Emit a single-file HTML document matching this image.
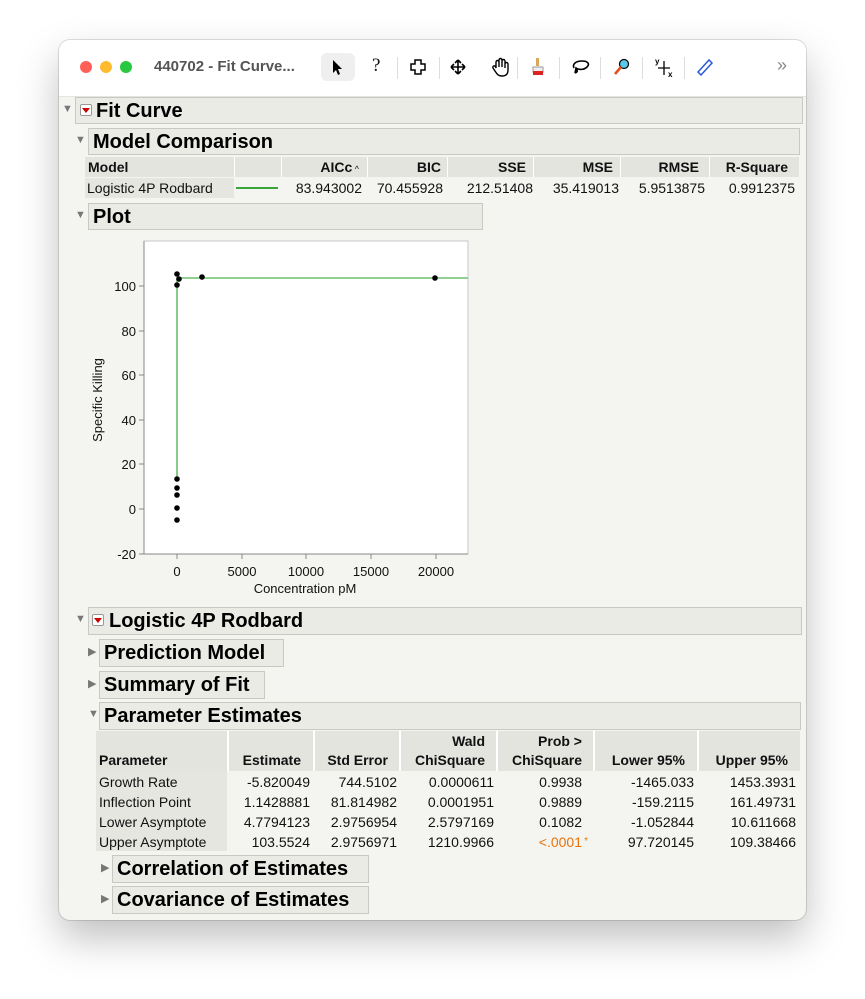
<!DOCTYPE html>
<html><head><style>
*{margin:0;padding:0;box-sizing:border-box}
body{width:865px;height:999px;background:#fff;position:relative;font-family:"Liberation Sans",Arial,sans-serif;overflow:hidden}
.win{position:absolute;left:59px;top:40px;width:747px;height:880px;border-radius:11px;background:#f4f4f0;box-shadow:0 18px 40px rgba(0,0,0,.25),0 0 0 1px rgba(0,0,0,.12);overflow:hidden}
.tb{position:absolute;left:0;top:0;width:747px;height:56px;background:#fff}
.a{position:absolute}
.hd{position:absolute;background:#ebebe6;border:1px solid #c9c9c4;font-weight:bold;color:#000;white-space:nowrap}
.h1{font-size:20px;line-height:27px;padding-left:4px}
.tri{position:absolute;font-size:11px;color:#777}
.t{position:absolute;font-size:14px;white-space:nowrap;color:#111}
.b{font-weight:bold}
.r{text-align:right}
.cell{position:absolute;background:#e6e6e1}
</style></head><body>
<div class="win">
<div class="tb">
 <div class="a" style="left:21px;top:21px;width:12px;height:12px;border-radius:6px;background:#fe5f57"></div>
 <div class="a" style="left:41px;top:21px;width:12px;height:12px;border-radius:6px;background:#febc2e"></div>
 <div class="a" style="left:61px;top:21px;width:12px;height:12px;border-radius:6px;background:#28c840"></div>
 <div class="t" style="left:95px;top:18px;font-size:15px;color:#555;font-weight:bold">440702 - Fit Curve...</div>
 <div class="a" style="left:262px;top:13px;width:34px;height:28px;border-radius:6px;background:#efefef"></div>
 <svg class="a" style="left:270px;top:18px" width="16" height="18"><path d="M4 2 L4 15 L7 12 L9 17 L11 16 L9 11 L13 11 Z" fill="#000"/></svg>
 <div class="t" style="left:313px;top:15px;font-size:19px;font-family:'Liberation Serif',serif">?</div>
 <div class="a" style="left:338px;top:17px;width:1px;height:22px;background:#ddd"></div>
 <svg class="a" style="left:351px;top:19px" width="16" height="16"><path d="M5 1h6v4h4v6h-4v4h-6v-4h-4v-6h4z" fill="none" stroke="#000" stroke-width="1.5"/></svg>
 <div class="a" style="left:380px;top:17px;width:1px;height:22px;background:#ddd"></div>
 <svg class="a" style="left:391px;top:19px" width="16" height="16"><path d="M8 1v14M1 8h14M8 1l-3 3M8 1l3 3M8 15l-3-3M8 15l3-3M1 8l3-3M1 8l3 3M15 8l-3-3M15 8l-3 3" stroke="#000" stroke-width="1.6" fill="none"/></svg>
 <svg class="a" style="left:432px;top:17px" width="20" height="20"><path d="M5 11V5a1.5 1.5 0 013 0v5V3a1.5 1.5 0 013 0v7V4a1.5 1.5 0 013 0v7V7a1.5 1.5 0 013 0v6c0 4-2 6-6 6s-5-2-7-5l-2-3a1.4 1.4 0 012.5-1.4z" fill="none" stroke="#000" stroke-width="1.4"/></svg>
 <div class="a" style="left:458px;top:17px;width:1px;height:22px;background:#ddd"></div>
 <svg class="a" style="left:472px;top:17px" width="14" height="20"><rect x="5" y="1" width="3" height="8" fill="#d9a65b"/><path d="M2 10h10v5H2z" fill="#eee" stroke="#999"/><path d="M2 14h10v4H2z" fill="#d22"/></svg>
 <div class="a" style="left:500px;top:17px;width:1px;height:22px;background:#ddd"></div>
 <svg class="a" style="left:512px;top:18px" width="20" height="18"><path d="M3 10c-2-4 2-7 8-7s8 3 5 6-8 3-11 1l-1 5M4 11c3 1 3 3 0 4" fill="none" stroke="#000" stroke-width="1.6"/></svg>
 <div class="a" style="left:541px;top:17px;width:1px;height:22px;background:#ddd"></div>
 <svg class="a" style="left:554px;top:18px" width="18" height="18"><circle cx="11" cy="6" r="4.5" fill="#5cc8e8" stroke="#000" stroke-width="1.2"/><path d="M8 9L2 16" stroke="#e05020" stroke-width="2.6"/></svg>
 <div class="a" style="left:583px;top:17px;width:1px;height:22px;background:#ddd"></div>
 <svg class="a" style="left:596px;top:17px" width="20" height="22"><text x="0" y="7" font-size="8" font-family="Liberation Sans" font-weight="bold">y</text><path d="M9 4v14M3 11h12" stroke="#000" stroke-width="1.3"/><text x="13" y="20" font-size="8" font-family="Liberation Sans" font-weight="bold">x</text></svg>
 <div class="a" style="left:625px;top:17px;width:1px;height:22px;background:#ddd"></div>
 <svg class="a" style="left:637px;top:18px" width="18" height="18"><path d="M2 14L13 2l3 3L5 17z" fill="none" stroke="#2a5ad8" stroke-width="1.5"/></svg>
 <div class="t" style="left:718px;top:15px;font-size:18px;color:#888">»</div>
</div>
<div class="a" style="left:0;top:56px;width:747px;height:1px;background:#e4e4e0"></div>
</div>

<div class="tri" style="left:62px;top:103px">▼</div>
<div class="hd h1" style="left:75px;top:97px;width:728px;height:27px;padding-left:20px">Fit Curve</div>
<div class="a" style="left:80px;top:104px;width:12px;height:12px;border:1px solid #999;background:#fff;border-radius:2px"></div>
<div class="a" style="left:82px;top:108px;width:0;height:0;border-left:4px solid transparent;border-right:4px solid transparent;border-top:5px solid #c00"></div>

<div class="tri" style="left:75px;top:134px">▼</div>
<div class="hd h1" style="left:88px;top:128px;width:712px;height:27px">Model Comparison</div>

<div class="cell" style="left:85px;top:157px;width:714px;height:20px;background:#e4e4df"></div>
<div class="a" style="left:234px;top:157px;width:1px;height:20px;background:#fff"></div>
<div class="a" style="left:281px;top:157px;width:1px;height:20px;background:#fff"></div>
<div class="a" style="left:367px;top:157px;width:1px;height:20px;background:#fff"></div>
<div class="a" style="left:447px;top:157px;width:1px;height:20px;background:#fff"></div>
<div class="a" style="left:533px;top:157px;width:1px;height:20px;background:#fff"></div>
<div class="a" style="left:620px;top:157px;width:1px;height:20px;background:#fff"></div>
<div class="a" style="left:709px;top:157px;width:1px;height:20px;background:#fff"></div>
<div class="t b" style="left:88px;top:159px">Model</div>
<div class="t b r" style="left:281px;top:159px;width:78px">AICc<span style="font-size:9px;font-weight:normal"> ^</span></div>
<div class="t b r" style="left:367px;top:159px;width:74px">BIC</div>
<div class="t b r" style="left:447px;top:159px;width:79px">SSE</div>
<div class="t b r" style="left:533px;top:159px;width:80px">MSE</div>
<div class="t b r" style="left:620px;top:159px;width:79px">RMSE</div>
<div class="t b r" style="left:709px;top:159px;width:79px">R-Square</div>
<div class="cell" style="left:85px;top:178px;width:149px;height:20px"></div>
<div class="t" style="left:87px;top:180px">Logistic 4P Rodbard</div>
<div class="a" style="left:236px;top:187px;width:42px;height:2px;background:#3aa63a"></div>
<div class="t r" style="left:281px;top:180px;width:81px">83.943002</div>
<div class="t r" style="left:367px;top:180px;width:76px">70.455928</div>
<div class="t r" style="left:447px;top:180px;width:86px">212.51408</div>
<div class="t r" style="left:533px;top:180px;width:86px">35.419013</div>
<div class="t r" style="left:620px;top:180px;width:85px">5.9513875</div>
<div class="t r" style="left:709px;top:180px;width:86px">0.9912375</div>

<div class="tri" style="left:75px;top:209px">▼</div>
<div class="hd h1" style="left:88px;top:203px;width:395px;height:27px">Plot</div>

<svg class="a" style="left:80px;top:232px" width="400" height="370" font-family="Liberation Sans" font-size="13">
 <rect x="64" y="9" width="324" height="313" fill="#fff" stroke="#c8c8c8"/>
 <path d="M64 9V322H388" fill="none" stroke="#888"/>
 <g stroke="#888"><path d="M59 54h5M59 99h5M59 143h5M59 188h5M59 232h5M59 277h5M59 322h5"/>
 <path d="M97 322v5M162 322v5M226 322v5M291 322v5M356 322v5"/></g>
 <g text-anchor="end" fill="#111"><text x="56" y="59">100</text><text x="56" y="104">80</text><text x="56" y="148">60</text><text x="56" y="193">40</text><text x="56" y="237">20</text><text x="56" y="282">0</text><text x="56" y="327">-20</text></g>
 <g text-anchor="middle" fill="#111"><text x="97" y="344">0</text><text x="162" y="344">5000</text><text x="226" y="344">10000</text><text x="291" y="344">15000</text><text x="356" y="344">20000</text>
 <text x="225" y="361">Concentration pM</text>
 <text transform="translate(22 168) rotate(-90)">Specific Killing</text></g>
 <path d="M97 248V46H388" fill="none" stroke="#6cc06c" stroke-width="1.6"/>
 <g fill="#000"><circle cx="97" cy="42" r="2.8"/><circle cx="97" cy="53" r="2.8"/><circle cx="99" cy="47" r="2.8"/><circle cx="122" cy="45" r="2.8"/><circle cx="355" cy="46" r="2.8"/>
 <circle cx="97" cy="247" r="2.8"/><circle cx="97" cy="256" r="2.8"/><circle cx="97" cy="263" r="2.8"/><circle cx="97" cy="276" r="2.8"/><circle cx="97" cy="288" r="2.8"/></g>
</svg>

<div class="tri" style="left:75px;top:613px">▼</div>
<div class="hd h1" style="left:88px;top:607px;width:714px;height:28px;padding-left:20px">Logistic 4P Rodbard</div>
<div class="a" style="left:92px;top:614px;width:12px;height:12px;border:1px solid #999;background:#fff;border-radius:2px"></div>
<div class="a" style="left:94px;top:618px;width:0;height:0;border-left:4px solid transparent;border-right:4px solid transparent;border-top:5px solid #c00"></div>

<div class="tri" style="left:88px;top:645px">▶</div>
<div class="hd h1" style="left:99px;top:639px;width:185px;height:28px">Prediction Model</div>
<div class="tri" style="left:88px;top:677px">▶</div>
<div class="hd h1" style="left:99px;top:671px;width:166px;height:28px">Summary of Fit</div>
<div class="tri" style="left:88px;top:708px">▼</div>
<div class="hd h1" style="left:99px;top:702px;width:702px;height:28px">Parameter Estimates</div>

<div class="cell" style="left:96px;top:731px;width:704px;height:40px;background:#e4e4df"></div>
<div class="cell" style="left:96px;top:771px;width:131px;height:80px"></div>
<div class="a" style="left:227px;top:731px;width:2px;height:40px;background:#fff"></div>
<div class="a" style="left:313px;top:731px;width:2px;height:40px;background:#fff"></div>
<div class="a" style="left:399px;top:731px;width:2px;height:40px;background:#fff"></div>
<div class="a" style="left:496px;top:731px;width:2px;height:40px;background:#fff"></div>
<div class="a" style="left:593px;top:731px;width:2px;height:40px;background:#fff"></div>
<div class="a" style="left:697px;top:731px;width:2px;height:40px;background:#fff"></div>
<div class="t b" style="left:99px;top:752px">Parameter</div>
<div class="t b r" style="left:229px;top:752px;width:72px">Estimate</div>
<div class="t b r" style="left:315px;top:752px;width:73px">Std Error</div>
<div class="t b r" style="left:401px;top:733px;width:84px">Wald</div>
<div class="t b r" style="left:401px;top:752px;width:84px">ChiSquare</div>
<div class="t b r" style="left:498px;top:733px;width:84px">Prob &gt;</div>
<div class="t b r" style="left:498px;top:752px;width:84px">ChiSquare</div>
<div class="t b r" style="left:595px;top:752px;width:90px">Lower 95%</div>
<div class="t b r" style="left:699px;top:752px;width:89px">Upper 95%</div>

<div class="t" style="left:99px;top:772px;line-height:20px">Growth Rate<br>Inflection Point<br>Lower Asymptote<br>Upper Asymptote</div>
<div class="t r" style="left:229px;top:772px;width:81px;line-height:20px">-5.820049<br>1.1428881<br>4.7794123<br>103.5524</div>
<div class="t r" style="left:315px;top:772px;width:82px;line-height:20px">744.5102<br>81.814982<br>2.9756954<br>2.9756971</div>
<div class="t r" style="left:401px;top:772px;width:93px;line-height:20px">0.0000611<br>0.0001951<br>2.5797169<br>1210.9966</div>
<div class="t r" style="left:498px;top:772px;width:84px;line-height:20px">0.9938<br>0.9889<br>0.1082<br><span style="color:#e8730c">&lt;.0001</span><span style="color:#e8730c;font-size:10px;position:absolute;right:-6px">*</span></div>
<div class="t r" style="left:595px;top:772px;width:99px;line-height:20px">-1465.033<br>-159.2115<br>-1.052844<br>97.720145</div>
<div class="t r" style="left:699px;top:772px;width:97px;line-height:20px">1453.3931<br>161.49731<br>10.611668<br>109.38466</div>

<div class="tri" style="left:101px;top:861px">▶</div>
<div class="hd h1" style="left:112px;top:855px;width:257px;height:28px">Correlation of Estimates</div>
<div class="tri" style="left:101px;top:892px">▶</div>
<div class="hd h1" style="left:112px;top:886px;width:257px;height:28px">Covariance of Estimates</div>
</body></html>
